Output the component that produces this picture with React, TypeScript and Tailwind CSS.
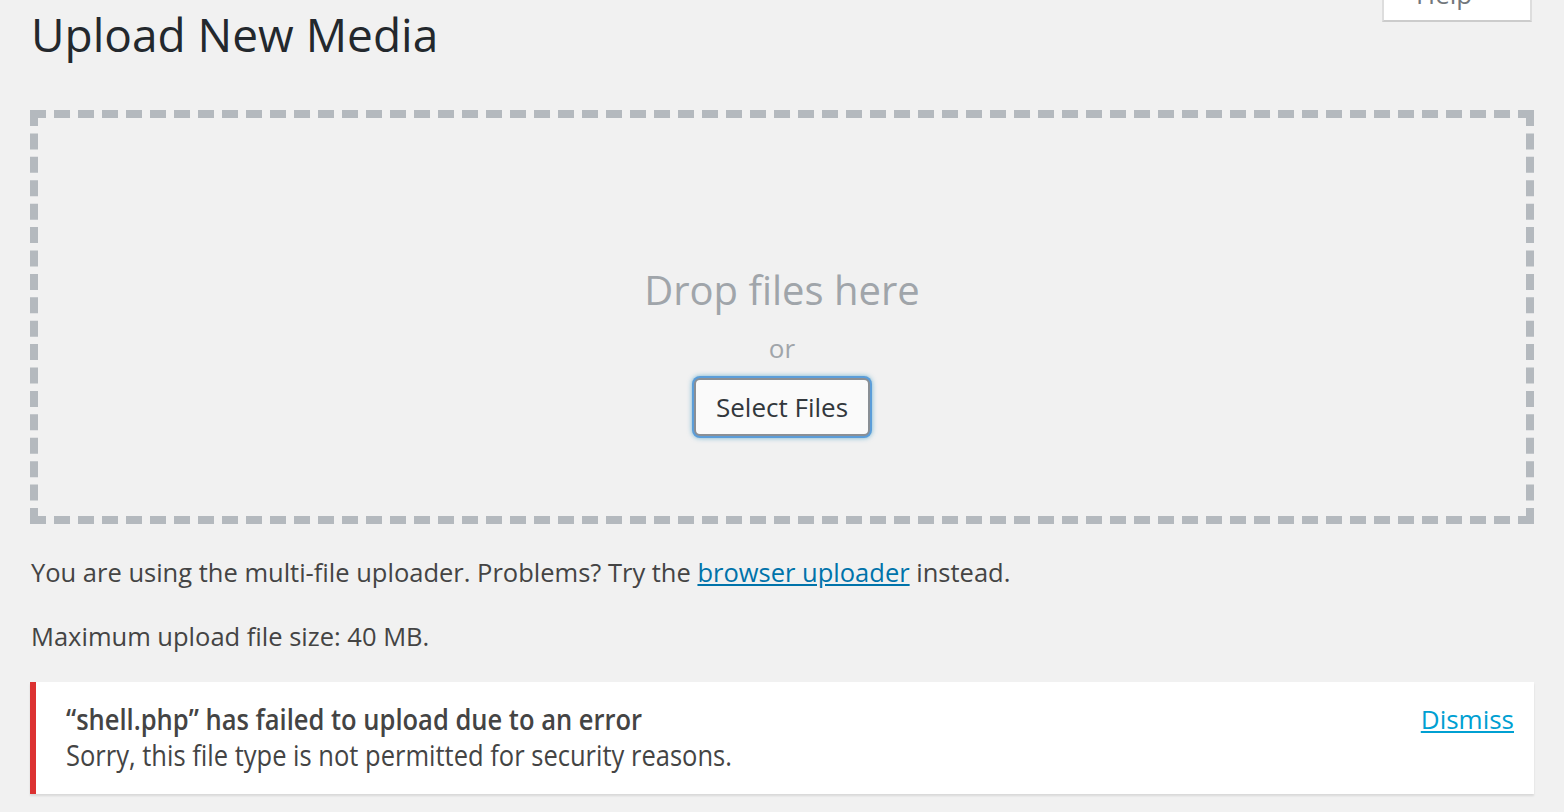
import React from 'react';

/**
 * Upload New Media screen
 * Drop zone, uploader notes and an upload error notice
 */
function HelpTab() {
  return (
    <button className="-mt-[34px] mr-[2px] h-[56px] w-[150px] shrink-0 border-2 border-t-0 border-[#dddddd] border-b-[#cccccc] bg-white pl-[32px] pt-[2px] text-left text-[26px] text-[#72777c]">
      Help
    </button>
  );
}

function DropZone() {
  return (
    <div className="flex h-[414px] flex-col items-center border-8 border-dashed border-[#b4b9be]">
      <p className="mt-[142px] text-[40px] leading-[60px] text-[#a0a5aa]">Drop files here</p>
      <p className="mt-[10px] text-[26px] leading-[36px] text-[#a0a5aa]">or</p>
      <button className="mt-[12px] h-[58px] rounded-[6px] border-2 border-[#8a8f95] bg-[#fafafa] px-[20px] text-[26px] text-[#32373c] shadow-[0_0_0_2px_#5b9dd9,0_0_5px_2px_rgba(30,140,190,0.6)]">
        Select Files
      </button>
    </div>
  );
}

function ErrorNotice() {
  return (
    <div className="mt-[28px] flex items-start justify-between border-l-[6px] border-[#dc3232] bg-white pb-[21px] pl-[30px] pr-[20px] pt-[19px] shadow-[0_2px_2px_rgba(0,0,0,0.1)]">
      <div className="origin-left scale-x-[0.88] whitespace-nowrap text-[29px] leading-[36px] text-[#444444]">
        <p className="font-semibold">“shell.php” has failed to upload due to an error</p>
        <p>Sorry, this file type is not permitted for security reasons.</p>
      </div>
      <a href="#" className="text-[26px] leading-[36px] text-[#00a0d2] underline">
        Dismiss
      </a>
    </div>
  );
}

export default function App() {
  return (
    <div className="min-h-screen overflow-hidden bg-[#f1f1f1] font-['Open_Sans',sans-serif]">
      <div className="px-[30px]">
        <div className="flex items-start justify-between">
          <h1 className="pl-[1px] pt-[4px] text-[46px] leading-[60px] text-[#23282d]">Upload New Media</h1>
          <HelpTab />
        </div>
        <div className="mt-[46px]">
          <DropZone />
        </div>
        <p className="mt-[30px] pl-[1px] text-[25.5px] leading-[36px] text-[#444444]">
          You are using the multi-file uploader. Problems? Try the{' '}
          <a href="#" className="text-[#0073aa] underline">browser uploader</a> instead.
        </p>
        <p className="mt-[28px] pl-[1px] text-[25.5px] leading-[36px] text-[#444444]">
          Maximum upload file size: 40 MB.
        </p>
        <ErrorNotice />
      </div>
    </div>
  );
}
